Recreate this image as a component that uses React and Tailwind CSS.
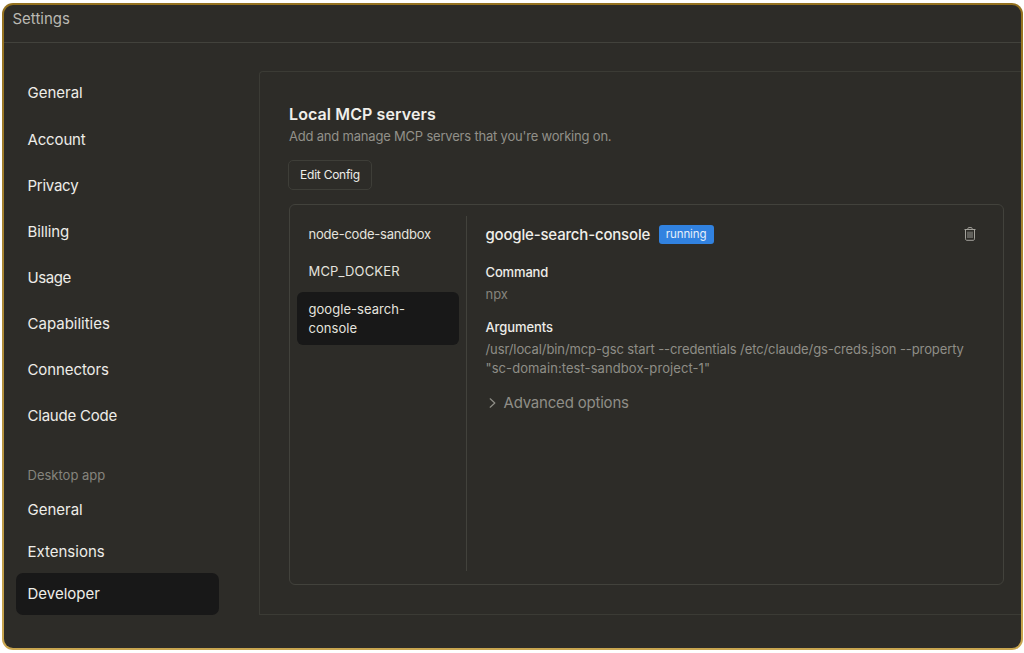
import React, { useState } from 'react';

const accountItems = [
  { label: 'General' },
  { label: 'Account', spacing: 'tracking-[-0.15px]' },
  { label: 'Privacy', spacing: 'tracking-[-0.25px]' },
  { label: 'Billing', spacing: 'tracking-[-0.1px]' },
  { label: 'Usage', spacing: 'tracking-[-0.4px]' },
  { label: 'Capabilities' },
  { label: 'Connectors', spacing: 'tracking-[-0.1px]' },
  { label: 'Claude Code', spacing: 'tracking-[-0.22px]' },
];

const desktopItems = ['General', 'Extensions', 'Developer'];

const servers = [
  { name: 'node-code-sandbox', row: 'h-[37px] pr-1 tracking-[-0.22px]' },
  { name: 'MCP_DOCKER', row: 'h-[36px] pr-1 tracking-[0.15px]' },
  { name: 'google-search-console', row: 'h-[53px] mt-[3px] pr-8 tracking-[0.05px]' },
];

const TrashIcon = () => (
  <svg width="12" height="14" viewBox="0 0 12 14" fill="none" stroke="currentColor">
    <path d="M0.5 2.5h11M3.9 2.5V1.5c0-.6.3-.9.9-.9h2.4c.6 0 .9.3.9.9v1" />
    <path d="M1.5 2.8v9c0 1 .5 1.5 1.5 1.5h6c1 0 1.5-.5 1.5-1.5v-9" />
    <path d="M4 4.6v6.4M6 4.6v6.4M8 4.6v6.4" strokeWidth="0.9" />
  </svg>
);

const ChevronIcon = () => (
  <svg width="7" height="10" viewBox="0 0 7 10" fill="none" stroke="currentColor" strokeWidth="1.2">
    <path d="M1.2 0.8L5.8 5L1.2 9.2" strokeLinecap="round" strokeLinejoin="round" />
  </svg>
);

const Sidebar = ({ active, onSelect }) => (
  <nav className="w-[255px] shrink-0 pt-[27.6px] pl-3 text-[15px] text-[#eeede8]">
    {accountItems.map(({ label, spacing = '' }) => (
      <div key={label} className={`flex h-[46.15px] items-center pl-[11.5px] ${spacing}`}>
        {label}
      </div>
    ))}

    {/* Desktop app */}
    <div className="mt-[27.2px] flex h-[18px] items-center pl-[11.5px] text-[13px] text-[#85847d]">
      Desktop app
    </div>
    <div className="mt-1">
      {desktopItems.map((item) => (
        <button
          key={item}
          onClick={() => onSelect(item)}
          className={`flex h-[42px] w-[203px] items-center rounded-[7px] pl-[11.5px] ${
            active === item ? 'bg-[#181818]' : ''
          }`}
        >
          {item}
        </button>
      ))}
    </div>
  </nav>
);

const ServerList = ({ selected, onSelect }) => (
  <div className="mt-[11px] mb-[13px] w-[177px] shrink-0 border-r border-[#42423c] pl-[7px]">
    {servers.map(({ name, row }) => (
      <button
        key={name}
        onClick={() => onSelect(name)}
        className={`flex w-[161.5px] items-center rounded-md pl-[11.5px] text-left text-[13px] leading-[19px] text-[#e4e3de] ${row} ${
          selected === name ? 'bg-[#181818]' : ''
        }`}
      >
        {name}
      </button>
    ))}
  </div>
);

const ServerDetails = ({ name }) => (
  <div className="flex-1 pl-[18.5px] pr-[27px] pt-[18px]">
    <div className="flex h-[22px] items-center">
      <h3 className="pt-[2px] text-[15px] font-medium tracking-[-0.18px] text-[#f0efea]">{name}</h3>
      <span className="ml-[8.5px] flex h-[19px] w-[55px] items-center justify-center rounded-[3px] bg-[#3182e0] pt-[2px] text-[11.5px] tracking-[-0.1px] text-[#e6effa]">
        running
      </span>
      <button className="ml-auto text-[#a3a29b]">
        <TrashIcon />
      </button>
    </div>

    {/* Command */}
    <h4 className="mt-[17px] text-[13px] font-medium leading-5 tracking-[-0.15px] text-[#eeede8]">Command</h4>
    <p className="mt-[2px] text-[13px] leading-5 text-[#85847d]">npx</p>

    {/* Arguments */}
    <h4 className="mt-[13px] text-[13px] font-medium leading-5 tracking-[-0.1px] text-[#eeede8]">Arguments</h4>
    <p className="mt-[3px] whitespace-nowrap text-[13px] leading-[19px] text-[#8f8e87]">
      <span className="tracking-[-0.1px]">
        /usr/local/bin/mcp-gsc start --credentials /etc/claude/gs-creds.json --property
      </span>
      <br />
      <span className="tracking-[0.08px]">"sc-domain:test-sandbox-project-1"</span>
    </p>

    <button className="mt-[14px] flex h-[22px] items-center gap-2 pl-[3px] text-[15px] tracking-[-0.2px] text-[#8f8e87]">
      <ChevronIcon />
      Advanced options
    </button>
  </div>
);

const App = () => {
  const [section, setSection] = useState('Developer');
  const [server, setServer] = useState('google-search-console');

  return (
    <div className="h-[653px] w-[1024px] overflow-hidden bg-white pl-[2px] pt-[3px] font-['Inter',sans-serif]">
      <div className="h-[647px] w-[1021px] rounded-[11px] bg-linear-to-b from-[#94711f] to-[#c9a650] p-[2px]">
        <div className="flex h-full flex-col overflow-hidden rounded-[9px] bg-[#2d2c28]">
          <header className="flex h-[38px] shrink-0 items-start border-b border-[#42423c] pl-[8.5px] pt-1">
            <h1 className="text-[15px] leading-5 text-[#bab9b3]">Settings</h1>
          </header>

          <div className="flex flex-1">
            <Sidebar active={section} onSelect={setSection} />

            <main className="mt-7 h-[544px] flex-1 rounded-tl-[4px] border-y border-l border-[#3b3b35] pl-[29px]">
              <h2 className="mt-[30px] text-[16px] font-semibold leading-6 tracking-[0.1px] text-[#f0efea]">
                Local MCP servers
              </h2>
              <p className="text-[13px] leading-5 tracking-[-0.2px] text-[#92918a]">
                Add and manage MCP servers that you're working on.
              </p>
              <button className="-ml-px mt-[14px] flex h-[30px] w-[84px] items-center justify-center rounded-[5px] border border-[#3e3e38] text-[12px] tracking-[-0.25px] text-[#eeede8]">
                Edit Config
              </button>

              <div className="mt-[14px] flex h-[381px] w-[715px] rounded-[6px] border border-[#42423c]">
                <ServerList selected={server} onSelect={setServer} />
                <ServerDetails name={server} />
              </div>
            </main>
          </div>
        </div>
      </div>
    </div>
  );
};

export default App;
